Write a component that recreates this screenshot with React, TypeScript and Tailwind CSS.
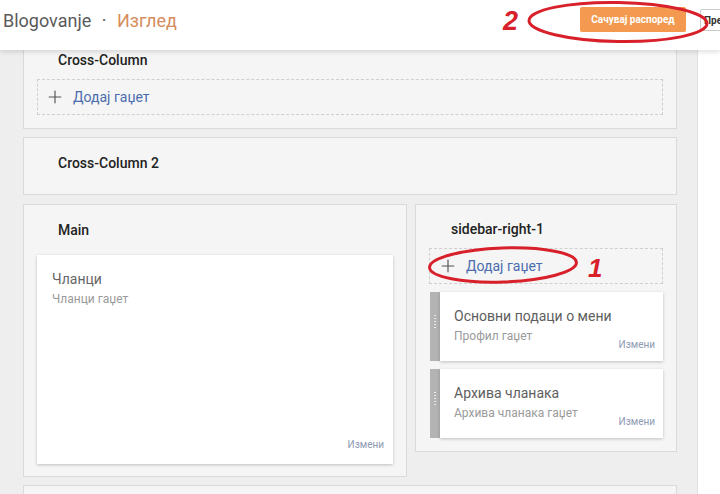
import { Plus } from 'lucide-react';

type Widget = { title: string; sub: string };

const SIDEBAR: Widget[] = [
  { title: 'Основни подаци о мени', sub: 'Профил гаџет' },
  { title: 'Архива чланака', sub: 'Архива чланака гаџет' },
];

function AddGadget({ pad }: { pad: string }) {
  return (
    <div className={`h-[36px] border border-dashed border-[#cfcfcf] flex items-center ${pad}`}>
      <Plus size={20} strokeWidth={1.4} className="text-[#555]" />
      <span className="ml-[8px] text-[14px] text-[#4a6cae]">Додај гаџет</span>
    </div>
  );
}

function Handle() {
  return (
    <div className="w-[10px] shrink-0 bg-[#b3b3b3] flex flex-col items-center justify-center gap-[2px] pb-[10px]">
      {[0, 1, 2, 3, 4].map(i => (
        <span key={i} className="block w-[2px] h-[1px] bg-[#e8e8e8]" />
      ))}
    </div>
  );
}

export default function App() {
  return (
    <div className="relative w-[720px] h-[494px] overflow-hidden bg-white font-['Roboto',sans-serif]">
      {/* Header */}
      <header className="relative z-10 h-[50px] bg-white shadow-[0_2px_5px_rgba(0,0,0,0.13)] flex items-center overflow-hidden">
        <div className="w-[580px] shrink-0 pl-[3px] text-[18px] text-[#5a5a5a] pb-[10px]">
          Blogovanje <span className="mx-[6px]">·</span> <span className="text-[#d68c5e]">Изглед</span>
        </div>
        <button className="w-[106px] h-[25px] shrink-0 mb-[11px] bg-[#f39a50] text-white text-[10px] font-bold rounded-[2px]">
          Сачувај распоред
        </button>
        <button className="ml-[14px] h-[22px] px-[3px] shrink-0 mb-[10px] bg-white border border-[#cccccc] text-[10px] font-bold text-[#333] rounded-[2px]">
          Преглед
        </button>
      </header>

      {/* Body */}
      <div className="flex h-[444px]">
        <div className="w-[698px] shrink-0 bg-[#eeeeee] border-r border-[#e0e0e0] pl-[23px] pr-[20px] flex flex-col gap-2">
          {/* Cross-Column */}
          <section className="shrink-0 bg-[#f5f5f5] border border-t-0 border-[#dadada] px-[13px] pt-[2px] pb-[13px]">
            <div className="pl-[21px] h-[16px] leading-[16px] text-[14px] font-medium text-[#222]">Cross-Column</div>
            <div className="mt-[11px]">
              <AddGadget pad="pl-[7px]" />
            </div>
          </section>

          {/* Cross-Column 2 */}
          <section className="shrink-0 h-[58px] bg-[#f5f5f5] border border-[#dadada] px-[13px] pt-[17px]">
            <div className="pl-[21px] h-[16px] leading-[16px] text-[14px] font-medium text-[#222]">Cross-Column 2</div>
          </section>

          {/* Main + sidebar */}
          <div className="shrink-0 mt-[1px] flex items-start gap-2">
            <section className="w-[384px] shrink-0 bg-[#f5f5f5] border border-[#dadada] px-[13px] pt-[17px] pb-[12px]">
              <div className="pl-[21px] h-[16px] leading-[16px] text-[14px] font-medium text-[#222]">Main</div>
              <div className="mt-[17px] h-[209px] bg-white shadow-[0_1px_3px_rgba(0,0,0,0.22)] flex flex-col pl-[15px] pr-[9px] pt-[16px] pb-[12px]">
                <div className="h-[16px] leading-[16px] text-[14px] text-[#666]">Чланци</div>
                <div className="mt-[5px] h-[14px] leading-[14px] text-[12px] text-[#9a9a9a]">Чланци гаџет</div>
                <div className="mt-auto self-end text-[10px] text-[#8d9ab3]">Измени</div>
              </div>
            </section>

            <section className="w-[262px] shrink-0 bg-[#f5f5f5] border border-[#dadada] px-[13px] pt-[16px] pb-[13px]">
              <div className="pl-[22px] h-[16px] leading-[16px] text-[14px] font-medium text-[#222]">sidebar-right-1</div>
              <div className="mt-[11px]">
                <AddGadget pad="pl-[8px]" />
              </div>
              <div className="mt-[8px] pl-[1px] flex flex-col gap-2">
                {SIDEBAR.map(w => (
                  <div key={w.title} className="h-[69px] flex">
                    <Handle />
                    <div className="flex-1 bg-white shadow-[0_1px_3px_rgba(0,0,0,0.22)] flex flex-col pl-[14px] pr-[8px] pt-[16px]">
                      <div className="h-[16px] leading-[16px] text-[14px] text-[#5e5e5e]">{w.title}</div>
                      <div className="mt-[5px] flex items-start">
                        <span className="h-[14px] leading-[14px] text-[12px] text-[#9a9a9a]">{w.sub}</span>
                        <span className="ml-auto mt-[8px] text-[10px] text-[#8d9ab3]">Измени</span>
                      </div>
                    </div>
                  </div>
                ))}
              </div>
            </section>
          </div>

          <section className="shrink-0 h-[40px] bg-[#f5f5f5] border border-[#dadada]" />
        </div>
        <div className="flex-1 bg-white" />
      </div>

      {/* Red annotations */}
      <svg className="absolute inset-0 z-20 pointer-events-none" width="720" height="494">
        <ellipse cx="618" cy="22" rx="89" ry="19.5" fill="none" stroke="#d8202b" strokeWidth="3" transform="rotate(1 618 22)" />
        <ellipse cx="503" cy="265" rx="73.5" ry="17" fill="none" stroke="#d8202b" strokeWidth="3" transform="rotate(-2 503 265)" />
      </svg>
      <span className="absolute z-20 left-[503px] top-[6px] text-[27px] leading-[30px] font-bold italic text-[#d8202b] font-['Liberation_Sans',sans-serif]">2</span>
      <span className="absolute z-20 left-[588px] top-[253px] text-[26px] leading-[30px] font-bold italic text-[#d8202b] font-['Liberation_Sans',sans-serif]">1</span>
    </div>
  );
}
